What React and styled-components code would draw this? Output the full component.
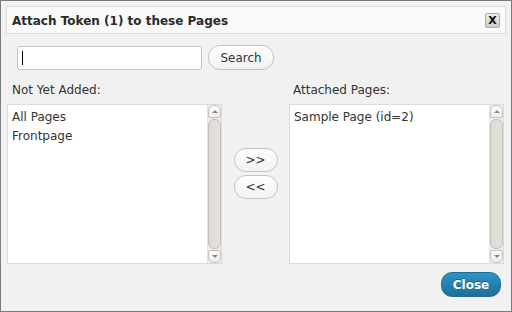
import React from "react";
import styled, { createGlobalStyle } from "styled-components";

const Global = createGlobalStyle`
  html, body { margin: 0; padding: 0; background: #f1f1f1; }
  body { font-family: "DejaVu Sans", Verdana, sans-serif; font-size: 12px; color: #333; }
  * { box-sizing: border-box; }
`;

const Window = styled.div`
  width: 512px;
  height: 312px;
  border: 1px solid #7b7b7b;
  background: #f1f1f1;
  display: flex;
  flex-direction: column;
`;

const TitleBar = styled.div`
  margin: 5px 5px 0 5px;
  height: 28px;
  background: #fafafa;
  border: 1px solid #dedede;
  display: flex;
  align-items: center;
  justify-content: space-between;
  padding: 0 5px 0 5px;
`;

const Title = styled.div`
  font-weight: bold;
  font-size: 12px;
  color: #2a2a2a;
  padding-top: 1px;
`;

const CloseX = styled.button`
  width: 15px;
  height: 15px;
  padding: 0;
  margin-top: 1px;
  border: 1px solid #a9a9a9;
  border-radius: 2px;
  background: linear-gradient(#ececec, #cdcdcd);
  font-family: "DejaVu Sans", sans-serif;
  font-weight: bold;
  font-size: 11px;
  line-height: 13px;
  color: #111;
  text-align: center;
`;

const SearchRow = styled.div`
  display: flex;
  align-items: flex-start;
  gap: 6px;
  margin: 11px 0 0 16px;
`;

const SearchBox = styled.div`
  width: 185px;
  height: 24px;
  margin-top: 1px;
  background: #fff;
  border: 1px solid #c6c6c6;
  border-radius: 3px;
  display: flex;
  align-items: center;
  padding-left: 4px;
`;

const Caret = styled.span`
  width: 1px;
  height: 14px;
  background: #000;
`;

const SearchInput = styled.input`
  flex: 1;
  min-width: 0;
  border: none;
  outline: none;
  background: transparent;
  font: inherit;
  caret-color: transparent;
`;

const PillButton = styled.button`
  width: ${(p) => p.$w}px;
  height: ${(p) => p.$h}px;
  padding: 0;
  border: 1px solid #c3c3c3;
  border-radius: 12px;
  background: linear-gradient(#fefefe, #f2f2f2);
  font-family: "DejaVu Sans", sans-serif;
  font-size: 12px;
  color: #333;
  text-align: center;
`;

const Panes = styled.div`
  display: grid;
  grid-template-columns: 215px 1fr 215px;
  grid-template-rows: 21px 160px;
  margin: 13px 7px 0 6px;
`;

const Label = styled.div`
  font-size: 12px;
  color: #333;
  line-height: 15px;
  padding-left: ${(p) => p.$pad}px;
`;

const ListBox = styled.div`
  display: flex;
  background: #fff;
  border: 1px solid #dcdcdc;
`;

const Items = styled.div`
  flex: 1;
  padding: 3px 4px;
`;

const Item = styled.div`
  line-height: 19px;
  font-size: 12px;
  color: #333;
  white-space: nowrap;
`;

const ScrollBar = styled.div`
  width: 14px;
  display: flex;
  flex-direction: column;
  background: #eeedeb;
  border-left: 1px solid #e4e2df;
`;

const ScrollBtn = styled.div`
  height: 13px;
  display: flex;
  align-items: center;
  justify-content: center;
  background: linear-gradient(#fdfdfd, #efeeec);
  border: 1px solid #c5c1ba;
  border-radius: ${(p) => (p.$up ? "6px 6px 2px 2px" : "2px 2px 6px 6px")};
`;

const Arrow = styled.span`
  width: 0;
  height: 0;
  border-left: 3px solid transparent;
  border-right: 3px solid transparent;
  ${(p) =>
    p.$up ? "border-bottom: 3px solid #8c8882;" : "border-top: 3px solid #8c8882;"}
`;

const Thumb = styled.div`
  flex: 1;
  margin: 1px 0;
  background: linear-gradient(90deg, #dedbd7, #e4e1dd);
  border: 1px solid #c2beb7;
  border-radius: 6px;
`;

const Middle = styled.div`
  display: flex;
  flex-direction: column;
  align-items: center;
  gap: 3px;
  padding-top: 44px;
`;

const Footer = styled.div`
  display: flex;
  justify-content: flex-end;
  margin: 8px 10px 0 0;
`;

const PrimaryButton = styled.button`
  width: 60px;
  height: 25px;
  padding: 0;
  border: 1px solid #1f6e93;
  border-radius: 11px;
  background: linear-gradient(#2d93c4, #1f6f98);
  color: #fff;
  font-family: "DejaVu Sans", sans-serif;
  font-weight: bold;
  font-size: 12px;
  text-shadow: 0 -1px 0 rgba(0, 0, 0, 0.3);
`;

function List({ items }) {
  return (
    <ListBox>
      <Items>
        {items.map((t) => (
          <Item key={t}>{t}</Item>
        ))}
      </Items>
      <ScrollBar>
        <ScrollBtn $up>
          <Arrow $up />
        </ScrollBtn>
        <Thumb />
        <ScrollBtn>
          <Arrow />
        </ScrollBtn>
      </ScrollBar>
    </ListBox>
  );
}

export default function App() {
  return (
    <>
      <Global />
      <Window>
        <TitleBar>
          <Title>Attach Token (1) to these Pages</Title>
          <CloseX>X</CloseX>
        </TitleBar>
        <SearchRow>
          <SearchBox>
            <Caret />
            <SearchInput type="text" />
          </SearchBox>
          <PillButton $w={66} $h={25}>Search</PillButton>
        </SearchRow>
        <Panes>
          <Label $pad={5}>Not Yet Added:</Label>
          <div />
          <Label $pad={4}>Attached Pages:</Label>
          <List items={["All Pages", "Frontpage"]} />
          <Middle>
            <PillButton $w={44} $h={24}>&gt;&gt;</PillButton>
            <PillButton $w={44} $h={24}>&lt;&lt;</PillButton>
          </Middle>
          <List items={["Sample Page (id=2)"]} />
        </Panes>
        <Footer>
          <PrimaryButton>Close</PrimaryButton>
        </Footer>
      </Window>
    </>
  );
}
